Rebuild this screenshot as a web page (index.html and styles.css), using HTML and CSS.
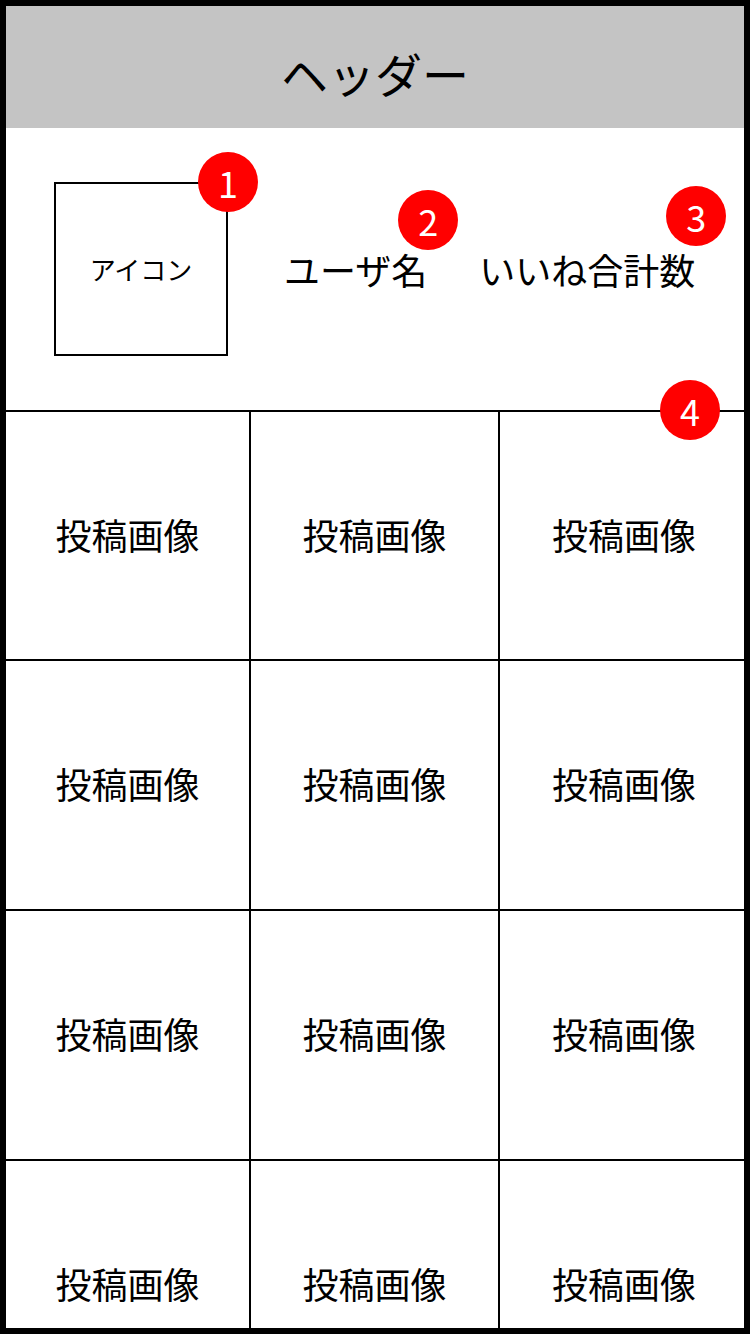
FILE: index.html
```html
<!DOCTYPE html>
<html lang="ja">
<head>
<meta charset="utf-8">
<title>プロフィール</title>
<link rel="stylesheet" href="styles.css">
</head>
<body>
<div class="screen">
  <header class="header">ヘッダー</header>
  <section class="profile">
    <div class="avatar">アイコン<span class="badge badge-avatar">1</span></div>
    <div class="username">ユーザ名<span class="badge badge-name">2</span></div>
    <div class="likes">いいね合計数<span class="badge badge-likes">3</span></div>
    <span class="badge badge-grid">4</span>
  </section>
  <section class="grid">
    <div class="cell">投稿画像</div>
    <div class="cell">投稿画像</div>
    <div class="cell">投稿画像</div>
    <div class="cell">投稿画像</div>
    <div class="cell">投稿画像</div>
    <div class="cell">投稿画像</div>
    <div class="cell">投稿画像</div>
    <div class="cell">投稿画像</div>
    <div class="cell">投稿画像</div>
    <div class="cell">投稿画像</div>
    <div class="cell">投稿画像</div>
    <div class="cell">投稿画像</div>
  </section>
</div>
</body>
</html>
```
FILE: styles.css
```css
* { box-sizing: border-box; }
html, body { margin: 0; padding: 0; }
body {
  font-family: "Noto Sans CJK JP", "Noto Sans", sans-serif;
  color: #000;
  background: #000;
}
.screen {
  width: 750px;
  height: 1334px;
  border: 6px solid #000;
  background: #fff;
  overflow: hidden;
  display: flex;
  flex-direction: column;
}
.header {
  flex: none;
  height: 122px;
  background: #c4c4c4;
  display: flex;
  align-items: center;
  justify-content: center;
  font-size: 47px;
  line-height: 1;
  padding-top: 10px;
}
.profile {
  flex: none;
  position: relative;
  height: 282px;
  display: flex;
  align-items: center;
  padding-left: 48px;
}
.avatar {
  position: relative;
  width: 174px;
  height: 174px;
  border: 2px solid #000;
  display: flex;
  align-items: center;
  justify-content: center;
  font-size: 26px;
  line-height: 1;
}
.username, .likes {
  position: relative;
  font-size: 36px;
  line-height: 1;
}
.username { margin-left: 56px; }
.likes { margin-left: 52px; }
.badge {
  position: absolute;
  z-index: 2;
  width: 60px;
  height: 60px;
  border-radius: 50%;
  background: #ff0000;
  color: #fff;
  font-size: 36px;
  line-height: 60px;
  text-align: center;
}
.badge-avatar { top: -32px; right: -32px; }
.badge-name { top: -61px; right: -31px; }
.badge-likes { top: -65px; right: -31px; }
.badge-grid { bottom: -30px; right: 24px; }
.grid {
  flex: none;
  display: grid;
  grid-template-columns: 245px 249px 244px;
  grid-template-rows: 249px;
  grid-auto-rows: 250px;
  border-top: 2px solid #000;
}
.cell {
  display: flex;
  align-items: center;
  justify-content: center;
  font-size: 36px;
  line-height: 1;
  padding-bottom: 4px;
  border-bottom: 2px solid #000;
  border-right: 2px solid #000;
}
.cell:nth-child(3n) {
  border-right: none;
  padding-left: 4px;
}
```
